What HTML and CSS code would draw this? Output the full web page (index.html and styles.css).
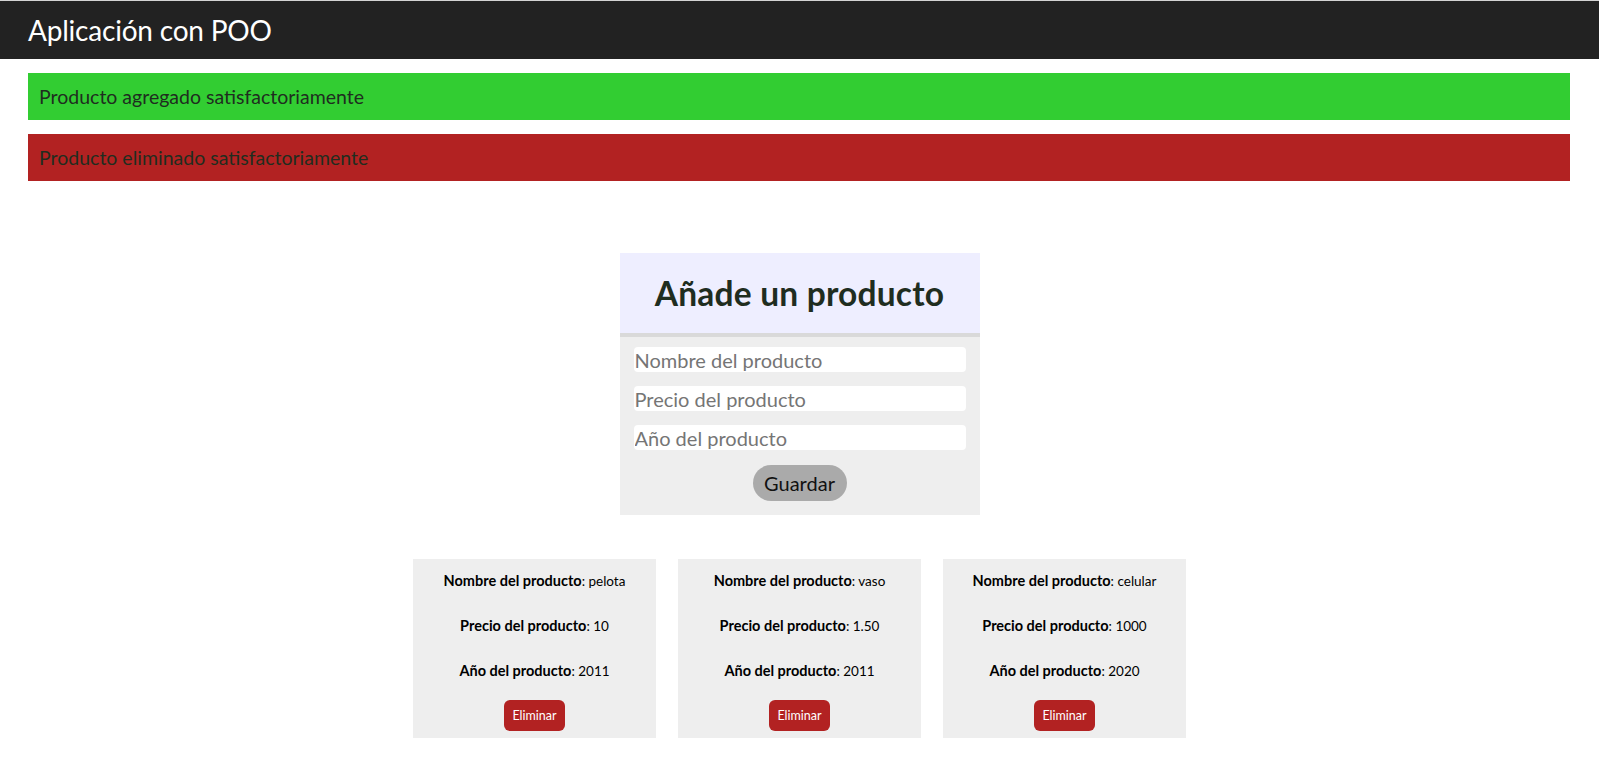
FILE: index.html
```html
<!DOCTYPE html>
<html lang="es">
<head>
<meta charset="utf-8">
<title>Aplicación con POO</title>
<link rel="stylesheet" href="styles.css">
</head>
<body>
<header class="topbar">
  <h1 class="brand">Aplicación con POO</h1>
</header>
<section class="alerts">
  <div class="alert alert-ok">Producto agregado satisfactoriamente</div>
  <div class="alert alert-del">Producto eliminado satisfactoriamente</div>
</section>
<main class="main">
  <form class="form-card">
    <div class="form-head"><h2 class="form-title">Añade un producto</h2></div>
    <div class="form-body">
      <input class="field" type="text" placeholder="Nombre del producto">
      <input class="field" type="text" placeholder="Precio del producto">
      <input class="field" type="text" placeholder="Año del producto">
      <button class="btn-save" type="button">Guardar</button>
    </div>
  </form>
  <section class="products">
    <article class="product">
      <p class="row"><b>Nombre del producto</b>: pelota</p>
      <p class="row"><b>Precio del producto</b>: 10</p>
      <p class="row"><b>Año del producto</b>: 2011</p>
      <button class="btn-del" type="button">Eliminar</button>
    </article>
    <article class="product">
      <p class="row"><b>Nombre del producto</b>: vaso</p>
      <p class="row"><b>Precio del producto</b>: 1.50</p>
      <p class="row"><b>Año del producto</b>: 2011</p>
      <button class="btn-del" type="button">Eliminar</button>
    </article>
    <article class="product">
      <p class="row"><b>Nombre del producto</b>: celular</p>
      <p class="row"><b>Precio del producto</b>: 1000</p>
      <p class="row"><b>Año del producto</b>: 2020</p>
      <button class="btn-del" type="button">Eliminar</button>
    </article>
  </section>
</main>
</body>
</html>
```
FILE: styles.css
```css
* { box-sizing: border-box; }
html, body { margin: 0; padding: 0; background: #fff; }
body {
  font-family: Lato, "Open Sans", sans-serif;
  color: #1f2d1f;
}
.topbar {
  background: #222;
  border-top: 1px solid #d4d4d4;
  height: 59px;
  display: flex;
  align-items: center;
  padding-left: 28px;
}
.brand {
  margin: 0;
  color: #fff;
  font-weight: 400;
  font-size: 28px;
  letter-spacing: -0.2px;
}
.alerts {
  display: flex;
  flex-direction: column;
  gap: 14px;
  padding: 14px 29px 0 28px;
}
.alert {
  height: 47px;
  display: flex;
  align-items: center;
  padding-left: 11px;
  font-size: 19.5px;
  color: #1f2d1f;
}
.alert-ok { background: #32cd32; }
.alert-del { background: #b22222; }
.main {
  display: flex;
  flex-direction: column;
  align-items: center;
  padding-top: 72px;
}
.form-card {
  width: 360px;
  background: #eee;
  margin: 0;
}
.form-head {
  background: #eeeeff;
  height: 84px;
  border-bottom: 4px solid #d9d9d9;
  display: flex;
  align-items: center;
  justify-content: center;
}
.form-title {
  margin: 0;
  font-size: 33.5px;
  font-weight: 700;
  letter-spacing: 0.2px;
  color: #1f2d1f;
}
.form-body {
  display: flex;
  flex-direction: column;
  align-items: center;
  gap: 14px;
  padding: 10px 14px 14px 14px;
}
.field {
  width: 100%;
  height: 25px;
  border: none;
  border-radius: 4px;
  background: #fff;
  padding: 0 0 0 1px;
  font-family: inherit;
  font-size: 20px;
  color: #333;
  outline: none;
}
.field::placeholder { color: #757575; }
.btn-save {
  margin-top: 1px;
  width: 94px;
  height: 36px;
  border: none;
  border-radius: 18px;
  background: #aaa;
  font-family: inherit;
  font-size: 20px;
  color: #111;
  padding: 0;
}
.products {
  display: flex;
  gap: 22px;
  margin-top: 44px;
}
.product {
  width: 243px;
  background: #eee;
  display: flex;
  flex-direction: column;
  align-items: center;
  padding: 13px 0 7px;
  gap: 27px;
}
.row {
  margin: 0;
  line-height: 18px;
  font-size: 13.5px;
  color: #000;
}
.row b { font-size: 14.5px; font-weight: 700; }
.btn-del {
  margin-top: -7px;
  width: 61px;
  height: 31px;
  border: none;
  border-radius: 6px;
  background: #b22222;
  color: #fff;
  font-family: inherit;
  font-size: 12.5px;
  padding: 0;
}
```
